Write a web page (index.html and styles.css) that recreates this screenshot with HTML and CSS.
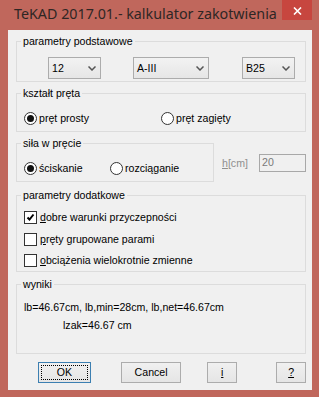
FILE: index.html
```html
<html>
<head>
	<meta charset="utf-8">
	<link rel="stylesheet" href="styles.css">
</head>
<body>
	<div class="window">
		<div class="titlebar">
			<span class="title">TeKAD 2017.01.- kalkulator zakotwienia</span>
			<span class="close"><svg width="9" height="8" viewBox="0 0 9 8"><path d="M1 0.5 L8 7.5 M8 0.5 L1 7.5" stroke="#fff" stroke-width="1.6" fill="none"/></svg></span>
		</div>
		<div class="client">
			<fieldset class="group basic">
				<legend>parametry podstawowe</legend>
				<div class="combo-row">
					<div class="combo small"><span>12</span><svg class="chev" width="8" height="5" viewBox="0 0 8 5"><path d="M0.5 0.5 L4 4 L7.5 0.5" stroke="#555" stroke-width="1.5" fill="none"/></svg></div>
					<div class="combo wide"><span>A-III</span><svg class="chev" width="8" height="5" viewBox="0 0 8 5"><path d="M0.5 0.5 L4 4 L7.5 0.5" stroke="#555" stroke-width="1.5" fill="none"/></svg></div>
					<div class="combo small"><span>B25</span><svg class="chev" width="8" height="5" viewBox="0 0 8 5"><path d="M0.5 0.5 L4 4 L7.5 0.5" stroke="#555" stroke-width="1.5" fill="none"/></svg></div>
				</div>
			</fieldset>

			<fieldset class="group shape">
				<legend>kształt pręta</legend>
				<div class="radio-row">
					<label class="radio first checked"><span class="mark"></span>pręt prosty</label>
					<label class="radio"><span class="mark"></span>pręt zagięty</label>
				</div>
			</fieldset>

			<div class="force-row">
				<fieldset class="group force">
					<legend>siła w pręcie</legend>
					<div class="radio-row">
						<label class="radio first checked"><span class="mark"></span>ściskanie</label>
						<label class="radio"><span class="mark"></span>rozciąganie</label>
					</div>
				</fieldset>
				<div class="height">
					<span class="h-label"><u>h</u>[cm]</span>
					<span class="h-input">20</span>
				</div>
			</div>

			<fieldset class="group extra">
				<legend>parametry dodatkowe</legend>
				<label class="check checked"><span class="box"><svg width="11" height="11" viewBox="0 0 11 11"><path d="M2.5 5.5 L4.5 7.5 L8.5 2.5" stroke="#000" stroke-width="2" fill="none"/></svg></span><u>d</u>obre warunki przyczepności</label>
				<label class="check"><span class="box"></span><u>p</u>ręty grupowane parami</label>
				<label class="check last"><span class="box"></span><u>o</u>bciążenia wielokrotnie zmienne</label>
			</fieldset>

			<fieldset class="group results">
				<legend>wyniki</legend>
				<div class="res-line">lb=46.67cm, lb,min=28cm, lb,net=46.67cm</div>
				<div class="res-total">lzak=46.67 cm</div>
			</fieldset>

			<div class="buttons">
				<span class="btn ok">OK</span>
				<span class="btn cancel">Cancel</span>
				<span class="btn info"><u>i</u></span>
				<span class="btn help"><u>?</u></span>
			</div>
		</div>
	</div>
</body>
</html>
```

FILE: styles.css
```css
*				{ box-sizing: border-box; }
body			{ margin: 0; padding: 0; font: 10.6px/13px "Liberation Sans", Arial, sans-serif; color: #000; }
u				{ text-decoration: underline; text-underline-offset: 1px; }

.window			{ width: 319px; height: 397px; padding: 0 7px 7px 8px; background: #c0675c;
				  display: flex; flex-direction: column; }
.titlebar		{ height: 30px; margin: 0 -7px 0 -8px; display: flex; align-items: flex-start; }
.title			{ flex: 1; padding: 4px 0 0 14px; font: 14.3px/20px "Noto Sans", "Open Sans", sans-serif; color: #2e2624; white-space: nowrap; }
.close			{ width: 30px; height: 20px; margin-right: 7px; background: #c7463f;
				  display: flex; align-items: center; justify-content: center; padding-top: 2px; }

.client			{ flex: 1; background: #f0f0f0; padding: 4px 6px 0 8px; display: flex; flex-direction: column; }

.group			{ margin: 0; padding: 0; min-width: 0; border: 1px solid #dcdcdc; }
.group legend	{ margin-left: 4px; padding: 0 2px; line-height: 14px; }
.basic			{ height: 48px; }
.shape			{ height: 46px; margin-top: 4px; }
.force-row		{ display: flex; margin-top: 4px; }
.force			{ width: 198px; height: 46px; }
.extra			{ height: 84px; margin-top: 6px; }
.results		{ height: 77px; margin-top: 5px; }

.combo-row		{ display: flex; margin: 9px 0 0 31px; }
.combo			{ height: 22px; padding: 0 4px 0 3px; border: 1px solid #acacac;
				  background: linear-gradient(#f2f2f2, #e6e6e6);
				  display: flex; align-items: center; justify-content: space-between; }
.combo.small	{ width: 53px; }
.combo.wide		{ width: 76px; margin: 0 33px 0 32px; }

.radio-row		{ display: flex; margin: 12px 0 0 7px; }
.radio			{ display: flex; align-items: center; height: 13px; }
.shape .first	{ width: 137px; }
.force .first	{ width: 86px; }
.radio .mark	{ width: 13px; height: 13px; margin-right: 2px; border: 1px solid #333; border-radius: 50%; background: #fff;
				  display: flex; align-items: center; justify-content: center; }
.radio.checked
 .mark::after	{ content: ""; width: 7px; height: 7px; border-radius: 50%; background: #111; }

.height			{ display: flex; align-items: center; height: 18px; margin: 18px 0 0 8px; }
.h-label		{ width: 26px; color: #8f8f8f; }
.h-input		{ width: 47px; height: 18px; margin-left: 11px; padding: 1px 2px; border: 1px solid #a8a8a8; color: #7a7a7a; }

.check			{ display: flex; align-items: center; height: 13px; margin: 9px 0 0 7px; }
.check.last		{ margin-top: 8px; }
.check .box		{ width: 13px; height: 13px; margin-right: 3px; border: 1px solid #333; background: #fff;
				  display: flex; align-items: center; justify-content: center; }

.res-line		{ margin: 10px 0 0 7px; }
.res-total		{ margin: 5px 0 0 46px; }

.buttons		{ display: flex; margin-top: 8px; padding-left: 22px; }
.btn			{ height: 21px; border: 1px solid #acacac; background: linear-gradient(#f0f0f0, #e5e5e5);
				  display: flex; align-items: center; justify-content: center; position: relative; }
.btn.ok			{ width: 55px; border-color: #3c7fb1; }
.btn.ok::after	{ content: ""; position: absolute; left: 2px; top: 2px; right: 2px; bottom: 2px; border: 1px dotted #000; }
.btn.cancel		{ width: 63px; margin-left: 30px; }
.btn.info		{ width: 31px; margin-left: 26px; }
.btn.help		{ width: 31px; margin-left: 39px; }
```
